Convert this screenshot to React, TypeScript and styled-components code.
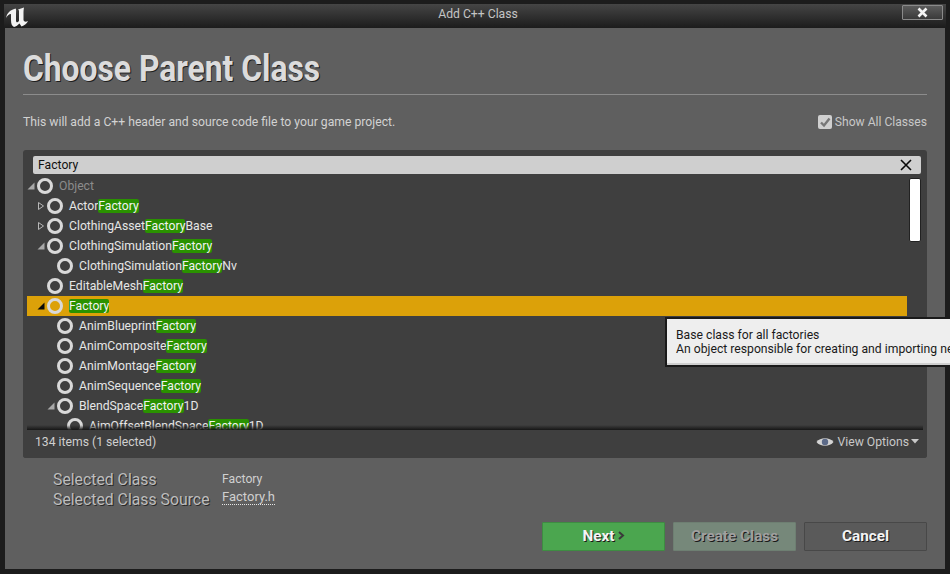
import React from "react";
import styled, { createGlobalStyle } from "styled-components";

const Global = createGlobalStyle`
  html, body { margin: 0; padding: 0; background: #1a1a1a; }
  * { box-sizing: border-box; }
`;

const Win = styled.div`
  width: 950px; height: 574px; position: relative; overflow: hidden;
  display: flex; flex-direction: column;
  padding: 4px 5px 5px 5px;
  background: #1c1c1c;
  font-family: Roboto, "Liberation Sans", sans-serif;
  font-size: 12.2px;
`;
const TitleBar = styled.div`
  height: 24px; flex: none; display: flex; align-items: center; justify-content: center;
  background: linear-gradient(#454545, #1c1c1c);
  color: #c4c4c4; position: relative; margin: 0 -1px; padding: 0 0 4px 6px;
`;
const Logo = styled.svg`
  position: absolute; left: 0; top: 0;
`;
const CloseBtn = styled.div`
  position: absolute; right: 3px; top: 1px; width: 41px; height: 15px;
  background: linear-gradient(#5c5c5c, #3a3a3a);
  border: 1px solid #8a8a8a; border-radius: 1px;
  display: flex; align-items: center; justify-content: center;
`;
const Body = styled.div`
  flex: 1; background: #5f5f5f; padding: 0 18px 0 18px; display: flex; flex-direction: column;
  min-height: 0; position: relative;
`;
const Heading = styled.h1`
  margin: 0; padding-top: 20px; height: 67px; border-bottom: 1px solid #8c8c8c; flex: none;
  font-size: 36px; line-height: 42px; font-weight: 700; color: #dcdcdc;
  text-shadow: 1px 1px 0 #1e1e1e;
`;
const HeadingText = styled.span`
  display: inline-block; transform: scaleX(0.883); transform-origin: left center; white-space: nowrap;
`;
const DescRow = styled.div`
  display: flex; align-items: center; justify-content: space-between;
  height: 55px; flex: none; color: #d2d2d2; padding-bottom: 2px;
`;
const CheckLabel = styled.label`
  display: flex; align-items: center; gap: 3px; color: #c8c8c8; font-size: 12.1px;
`;
const CheckBox = styled.span`
  width: 14px; height: 14px; background: #d0d0d0; border-radius: 2px; display: flex;
  align-items: center; justify-content: center;
`;
const Panel = styled.div`
  height: 308px; flex: none; background: #3f3f3f; border-radius: 3px; position: relative;
  display: flex; flex-direction: column; padding: 6px 6px 0 4px;
`;
const Search = styled.div`
  height: 18px; flex: none; margin-left: 6px; background: #cfcfcf; border-radius: 2px;
  color: #111; display: flex; align-items: center; justify-content: space-between;
  padding: 0 9px 0 5px;
`;
const TreeArea = styled.div`
  flex: 1; min-height: 0; overflow: hidden; position: relative; padding-top: 2px;
`;
const Scrollbar = styled.div`
  position: absolute; right: 0; top: 4px; width: 12px; height: 64px; background: #fff;
  border: 1px solid #222; border-radius: 2px;
`;
const Row = styled.div<{ $depth: number; $selected?: boolean }>`
  height: 20px; width: 880px; display: flex; align-items: center; position: relative;
  padding-left: ${(p) => p.$depth * 10}px;
  background: ${(p) => (p.$selected ? "#dca109" : "transparent")};
  color: ${(p) => (p.$selected ? "#f4f4f4" : "#e6e6e6")};
`;
const Arrow = styled.svg`
  width: 8px; height: 8px; flex: none;
`;
const ArrowSlot = styled.span`
  width: 10px; flex: none; display: flex; align-items: center; justify-content: flex-start;
`;
const Ring = styled.span`
  width: 16px; height: 16px; flex: none; border-radius: 50%; border: 3px solid #d9d9d9;
  margin-right: 6px;
`;
const Name = styled.span<{ $dim?: boolean }>`
  color: ${(p) => (p.$dim ? "#8c8c8c" : "inherit")}; white-space: nowrap; line-height: 18px;
`;
const Hit = styled.span`
  background: #2a9200; color: #f2f2f2; border-radius: 2px;
`;
const StatusBar = styled.div`
  height: 28px; flex: none; margin: 0 -6px 0 -4px; padding: 0 8px 5px 12px; display: flex; align-items: center;
  justify-content: space-between; color: #cfcfcf; position: relative;
  background: #3f3f3f; border-radius: 0 0 3px 3px;
  &::before {
    content: ""; position: absolute; left: 4px; right: 4px; top: -5px; height: 5px;
    background: linear-gradient(rgba(20,20,20,0), #161616);
  }
`;
const ViewOptions = styled.span`
  display: flex; align-items: center; gap: 3px; color: #c8c8c8;
`;
const Caret = styled.svg`
  margin-left: -1px;
`;
const Info = styled.div`
  flex: none; display: grid; grid-template-columns: 169px auto; padding: 12px 0 0 30px; justify-content: start;
`;
const InfoLabel = styled.div`
  font-size: 15.8px; line-height: 20px; color: #bdbdbd; text-shadow: 1px 1px 0 #2a2a2a; height: 20px;
`;
const InfoValue = styled.div`
  line-height: 17px; padding-top: 1px; color: #d0d0d0; height: 20px;
`;
const InfoLink = styled.div`
  height: 20px; margin-top: -1px; font-size: 13px; color: #d0d0d0;
  span { border-bottom: 1px dotted #e6e6e6; display: inline-block; line-height: 15px; }
`;
const Footer = styled.div`
  flex: none; display: flex; justify-content: flex-end; gap: 8px; margin-top: 12px;
`;
const Btn = styled.div<{ $kind: "green" | "off" | "plain" }>`
  width: 123px; height: 29px; display: flex; align-items: center; justify-content: center; gap: 3px;
  border-radius: 1px; font-size: 15.3px; font-weight: 700; padding-bottom: 2px;
  background: ${(p) => (p.$kind === "green" ? "#4ba64f" : p.$kind === "off" ? "#76887a" : "#5a5a5a")};
  border: 1px solid ${(p) => (p.$kind === "green" ? "#3e8c42" : p.$kind === "off" ? "#6e7f72" : "#484848")};
  color: ${(p) => (p.$kind === "off" ? "#a0a0a0" : "#f4f4f4")};
  text-shadow: 1px 1px 0 #1a1a1a;
`;
const Tip = styled.div`
  position: absolute; left: 665px; top: 317px; width: 290px; height: 50px;
  background: #eeeeee; border: 2px solid #1a1a1a; border-right: none;
  color: #1a1a1a; padding: 9px 0 0 9px; line-height: 14px; white-space: nowrap;
  box-shadow: inset 0 -2px 0 #cfcfcf;
`;

type Item = { d: number; pre?: string; hit?: string; post?: string; arrow?: "open" | "closed" | "solid"; dim?: boolean; sel?: boolean };
const items: Item[] = [
  { d: 0, pre: "Object", arrow: "open", dim: true },
  { d: 1, pre: "Actor", hit: "Factory", arrow: "closed" },
  { d: 1, pre: "ClothingAsset", hit: "Factory", post: "Base", arrow: "closed" },
  { d: 1, pre: "ClothingSimulation", hit: "Factory", arrow: "open" },
  { d: 2, pre: "ClothingSimulation", hit: "Factory", post: "Nv" },
  { d: 1, pre: "EditableMesh", hit: "Factory" },
  { d: 1, hit: "Factory", arrow: "solid", sel: true },
  { d: 2, pre: "AnimBlueprint", hit: "Factory" },
  { d: 2, pre: "AnimComposite", hit: "Factory" },
  { d: 2, pre: "AnimMontage", hit: "Factory" },
  { d: 2, pre: "AnimSequence", hit: "Factory" },
  { d: 2, pre: "BlendSpace", hit: "Factory", post: "1D", arrow: "open" },
  { d: 3, pre: "AimOffsetBlendSpace", hit: "Factory", post: "1D" },
];

const ArrowIcon = ({ kind }: { kind: "open" | "closed" | "solid" }) => (
  <Arrow viewBox="0 0 8 8">
    {kind === "closed" ? (
      <path d="M1.5 0.5 L6.5 4 L1.5 7.5 Z" fill="none" stroke="#b8b8b8" strokeWidth="1" />
    ) : (
      <path d="M7.5 0.5 V7.5 H0.5 Z" fill={kind === "solid" ? "#0a0a0a" : "#a8a8a8"} />
    )}
  </Arrow>
);

export default function App() {
  return (
    <Win>
      <Global />
      <TitleBar>
        <Logo width="30" height="24" viewBox="0 0 30 24">
          <path
            d="M2 14 C3 9 6 6 11.5 4.5 C12.5 5 12 7 12 10 L12 17 C12.5 19 13.5 18.5 15 17 L15 8 C15 6.5 15 6 14 5.5 L20 3.5 C19.5 6 19.5 8 19.5 10 L19.5 16 C20 18 22 18 24 17 C23 19.5 20.5 21.5 17.5 22.5 L15.5 19.5 C14 21 12 22.5 10 23 C8 22 7 20 7 16 L7 10 C5 10 3 12 2 14 Z"
            fill="#f2f2f2"
          />
        </Logo>
        Add C++ Class
        <CloseBtn>
          <svg width="11" height="11" viewBox="0 0 11 11">
            <path d="M1.5 1.5 L9.5 9.5 M9.5 1.5 L1.5 9.5" stroke="#f5f5f5" strokeWidth="2.6" />
          </svg>
        </CloseBtn>
      </TitleBar>
      <Body>
        <Heading>
          <HeadingText>Choose Parent Class</HeadingText>
        </Heading>
        <DescRow>
          <span>This will add a C++ header and source code file to your game project.</span>
          <CheckLabel>
            <CheckBox>
              <svg width="12" height="12" viewBox="0 0 12 12">
                <path d="M2 6.5 L5 9.5 L10.5 2.5" fill="none" stroke="#777" strokeWidth="2.4" />
              </svg>
            </CheckBox>
            Show All Classes
          </CheckLabel>
        </DescRow>
        <Panel>
          <Search>
            Factory
            <svg width="12" height="12" viewBox="0 0 12 12">
              <path d="M1 1 L11 11 M11 1 L1 11" stroke="#0a0a0a" strokeWidth="1.6" />
            </svg>
          </Search>
          <TreeArea>
            <Scrollbar />
            {items.map((it, i) => (
              <Row key={i} $depth={it.d} $selected={it.sel}>
                <ArrowSlot>{it.arrow && <ArrowIcon kind={it.arrow} />}</ArrowSlot>
                <Ring />
                <Name $dim={it.dim}>
                  {it.pre}
                  {it.hit && <Hit>{it.hit}</Hit>}
                  {it.post}
                </Name>
              </Row>
            ))}
          </TreeArea>
          <StatusBar>
            134 items (1 selected)
            <ViewOptions>
              <svg width="18" height="12" viewBox="0 0 18 12">
                <path d="M0.5 6 C4 1 14 1 17.5 6 C14 11 4 11 0.5 6 Z" fill="#d4d4d4" />
                <circle cx="9" cy="6" r="3.2" fill="#5c6a88" />
              </svg>
              View Options
              <Caret width="8" height="5" viewBox="0 0 8 5">
                <path d="M0 0 H8 L4 4.5 Z" fill="#c8c8c8" />
              </Caret>
            </ViewOptions>
          </StatusBar>
        </Panel>
        <Info>
          <InfoLabel>Selected Class</InfoLabel>
          <InfoValue>Factory</InfoValue>
          <InfoLabel>Selected Class Source</InfoLabel>
          <InfoLink>
            <span>Factory.h</span>
          </InfoLink>
        </Info>
        <Footer>
          <Btn $kind="green">
            Next
            <svg width="7" height="9" viewBox="0 0 7 9">
              <path d="M1 1 L5 4.5 L1 8" fill="none" stroke="#3a3a3a" strokeWidth="2" />
            </svg>
          </Btn>
          <Btn $kind="off">Create Class</Btn>
          <Btn $kind="plain">Cancel</Btn>
        </Footer>
      </Body>
      <Tip>
        Base class for all factories
        <br />
        An object responsible for creating and importing new objects.
      </Tip>
    </Win>
  );
}
